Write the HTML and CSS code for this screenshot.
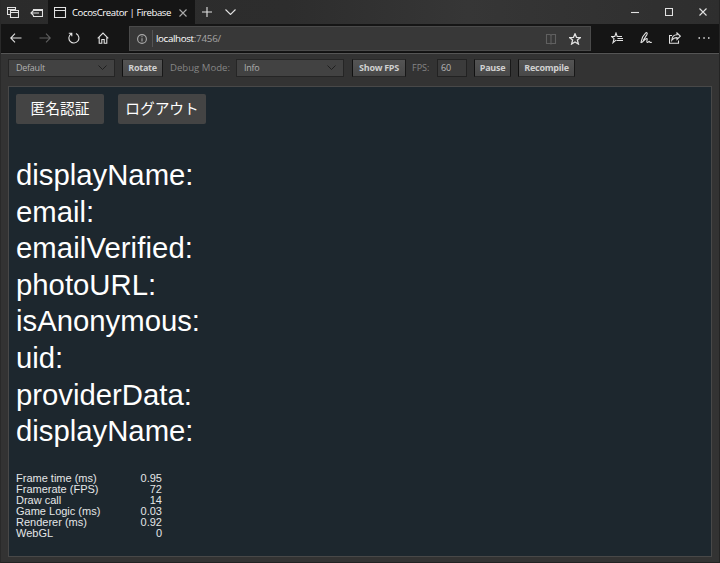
FILE: index.html
```html
<!DOCTYPE html>
<html lang="ja">
<head>
<meta charset="utf-8">
<title>CocosCreator | Firebase</title>
<link rel="stylesheet" href="styles.css">
</head>
<body>
<div class="window">
  <header class="tabs">
    <svg class="icon tabs-list" width="12" height="12" viewBox="0 0 12 12"><path d="M3 7.500H.5v-7h8V3M.5 2.500h8M3.500 3.500h8v7h-8zM3.500 5.500h8"/></svg>
    <svg class="icon tabs-aside" width="13" height="12" viewBox="0 0 13 12"><path d="M3.500 3.500v-1h9v7h-9v-1M3.500 3.500h9M9 6H1M3.500 3.500L1 6l2.500 2.500"/></svg>
    <div class="tab">
      <svg class="icon" width="13" height="12" viewBox="0 0 13 12"><path d="M.5.5h11v10H.5zM.5 3.500h11"/></svg>
      <span class="tab-title">CocosCreator | Firebase</span>
      <svg class="icon dim" width="8" height="8" viewBox="0 0 8 8"><path d="M.5.5l7 7M7.500.5l-7 7"/></svg>
    </div>
    <svg class="icon new-tab" width="10" height="10" viewBox="0 0 10 10"><path d="M5 0v10M0 5h10"/></svg>
    <svg class="icon tab-more" width="11" height="6" viewBox="0 0 11 6"><path d="M.5.5l5 5 5-5"/></svg>
    <div class="window-controls">
      <svg class="icon" width="8" height="8" viewBox="0 0 8 8"><path d="M0 4.500h8"/></svg>
      <svg class="icon" width="8" height="8" viewBox="0 0 8 8"><path d="M.5.5h7v7h-7z"/></svg>
      <svg class="icon" width="8" height="8" viewBox="0 0 8 8"><path d="M.5.5l7 7M7.500.5l-7 7"/></svg>
    </div>
  </header>
  <nav class="navbar">
    <div class="history">
      <svg class="icon" width="12" height="10" viewBox="0 0 12 10"><path d="M11.500 5H1M5 .7L.7 5 5 9.300"/></svg>
      <svg class="icon faint" width="12" height="10" viewBox="0 0 12 10"><path d="M.5 5H11M7 .7L11.300 5 7 9.300"/></svg>
      <svg class="icon" width="12" height="12" viewBox="0 0 12 12"><path d="M8 1.500a5 5 0 1 1-4.600.2M.8 1.200h3v3"/></svg>
      <svg class="icon" width="12" height="12" viewBox="0 0 12 12"><path d="M.7 6.300L6 1l5.300 5.300M2.200 5v6.300h2.600V7.500h2.400v3.800h2.600V5"/></svg>
    </div>
    <div class="address">
      <svg class="icon dim" width="10" height="10" viewBox="0 0 10 10"><circle cx="5" cy="5" r="4.400"/><path d="M5 4.200v3.300M5 2.300v1"/></svg>
      <span class="url">localhost<span class="port">:7456/</span></span>
      <svg class="icon faint" width="12" height="12" viewBox="0 0 12 12"><path d="M1.500 1.500h3.500l1 1 1-1h3.500v9H7l-1 .5-1-.5H1.500zM6 2v9"/></svg>
      <svg class="icon star" width="12" height="12" viewBox="0 0 12 12"><path d="M6 .8l1.500 3.500 3.900.3-3 2.500 1 3.900L6 8.900 2.600 11l1-3.900-3-2.500 3.900-.3z"/></svg>
    </div>
    <div class="actions">
      <svg class="icon" width="12" height="12" viewBox="0 0 12 12"><path d="M5 8.200L2 10.700l1-4L.5 4.500h3.300L5 1l1.200 3.500H11M6.500 6.500H12M5.500 8.500H12"/></svg>
      <svg class="icon" width="12" height="12" viewBox="0 0 12 12"><path d="M.8 10.800L2.600 5 5.700.9c1.300-.8 1.900.4 1.200 1.700L3.200 8.500M.8 10.800c2.800-1 4-4 6-4.300 1.300 0-.9 3.500.5 3.900 1 .3 1.200-1.200 2-1 .7.300.2 1.600 2.500.9"/></svg>
      <svg class="icon" width="12" height="12" viewBox="0 0 12 12"><path d="M3 3.500H.5v7.800h9V8.500M8 1l3.300 3.200L8 7.400V5.600C5.500 5.600 4 6.500 2.800 8.300 3 5 5 2.900 8 2.800z"/></svg>
      <svg class="icon dots" width="12" height="12" viewBox="0 0 12 12"><path d="M.5 6H2M5.300 6h1.500M10 6h1.500"/></svg>
    </div>
  </nav>
  <div class="toolbar">
    <div class="select device">Default<svg class="chevron" width="9" height="6" viewBox="0 0 9 6"><path d="M.5.5l4 4 4-4"/></svg></div>
    <div class="button rotate">Rotate</div>
    <span class="label debug">Debug Mode:</span>
    <div class="select mode">Info<svg class="chevron" width="9" height="6" viewBox="0 0 9 6"><path d="M.5.5l4 4 4-4"/></svg></div>
    <div class="button show-fps">Show FPS</div>
    <span class="label fps">FPS:</span>
    <div class="number">60</div>
    <div class="button pause">Pause</div>
    <div class="button recompile">Recompile</div>
  </div>
  <main class="game">
    <div class="game-buttons">
      <div class="game-button">匿名認証</div>
      <div class="game-button">ログアウト</div>
    </div>
    <div class="fields">
      <div>displayName:</div>
      <div>email:</div>
      <div class="verified">emailVerified:</div>
      <div>photoURL:</div>
      <div>isAnonymous:</div>
      <div>uid:</div>
      <div>providerData:</div>
      <div>displayName:</div>
    </div>
    <div class="stats">
      <div><span>Frame time (ms)</span><span>0.95</span></div>
      <div><span>Framerate (FPS)</span><span>72</span></div>
      <div><span>Draw call</span><span>14</span></div>
      <div><span>Game Logic (ms)</span><span>0.03</span></div>
      <div><span>Renderer (ms)</span><span>0.92</span></div>
      <div><span>WebGL</span><span>0</span></div>
    </div>
  </main>
</div>
</body>
</html>
```
FILE: styles.css
```css
* { box-sizing: border-box; }
body { margin: 0; background: #333; overflow: hidden; }
.window {
  width: 720px;
  height: 563px;
  border-left: 1px solid #292929;
  border-right: 1px solid #242424;
  border-bottom: 1px solid #222;
  background: #333;
  font-family: "Open Sans", "Noto Sans", sans-serif;
}
.icon { fill: none; stroke: #e2e2e2; stroke-width: 1.1; flex: none; }
.icon.dim { stroke: #aaa; }
.icon.faint { stroke: #606060; }
.icon.star { stroke-width: 1.3; }

.tabs { display: flex; align-items: center; height: 24px; background: linear-gradient(90deg, #2b2b2b, #2d2d2d 40%, #363636 65%, #2e2e2e); }
.tabs-list { margin: 1px 0 0 6px; }
.tabs-aside { margin: 1px 5px 0 11px; }
.tab { display: flex; align-items: center; width: 147px; height: 24px; padding: 1px 0 0 6px; background: #151515; }
.tab-title { width: 101px; margin: 0 6px 0 5px; font-size: 9.6px; letter-spacing: -0.42px; line-height: 14px; color: #fff; white-space: nowrap; }
.new-tab { margin-left: 7px; }
.tab-more { margin-left: 13px; }
.window-controls { display: flex; gap: 26px; margin-left: auto; padding-right: 12px; }

.navbar { display: flex; align-items: center; height: 29px; background: #151515; border-bottom: 1px solid #101010; }
.history { display: flex; align-items: center; width: 128px; padding-left: 9px; gap: 17px; }
.history .icon:nth-child(3) { margin-left: 0; }
.history .icon:nth-child(2) { margin-right: 0; }
.address { display: flex; align-items: center; width: 462px; height: 25px; margin-top: 1px; padding: 0 9px 0 7px; background: #383838; border: 1px solid #4a4a4a; }
.url { flex: 1; margin-left: 5px; padding-left: 3px; border-left: 1px solid #555; font-size: 9.8px; line-height: 17px; letter-spacing: -0.38px; color: #fff; }
.port { color: #a5a5a5; letter-spacing: -0.2px; }
.address .icon.faint { margin-right: 12px; }
.actions { display: flex; flex: 1; gap: 17px; padding-left: 20px; }
.dots { stroke-width: 1.5; }

.toolbar { display: flex; align-items: center; height: 33px; padding: 0 0 5px 7px; border-top: 1px solid #555; font-size: 9px; line-height: 16px; white-space: nowrap; }
.select { display: flex; align-items: center; justify-content: space-between; height: 18px; padding: 0 7px; background: #424242; border: 1px solid #252525; color: #b0b0b0; letter-spacing: -0.25px; }
.chevron { fill: none; stroke: #1f1f1f; }
.device { width: 107px; }
.mode { width: 108px; }
.button { display: flex; align-items: center; justify-content: center; height: 18px; background: linear-gradient(#545454, #484848); border: 1px solid #292929; border-left-color: #111; border-right-color: #181818; color: #d0d0d0; font-weight: 700; letter-spacing: -0.27px; }
.rotate { width: 41px; margin-left: 7px; }
.label { color: #858585; }
.debug { width: 66px; margin-left: 7px; font-size: 9.6px; }
.show-fps { width: 54px; margin-left: 8px; }
.fps { width: 18px; margin-left: 6px; }
.number { width: 30px; height: 18px; margin-left: 7px; padding-left: 3px; background: #3b3b3b; border: 1px solid #222; color: #b8b8b8; letter-spacing: -0.25px; }
.pause { width: 37px; margin-left: 7px; }
.recompile { width: 57px; margin-left: 7px; }

.game { width: 704px; height: 471px; margin-left: 7px; padding: 7px; overflow: hidden; background: #1d272e; border: 1px solid #484848; color: #fff; font-family: "Liberation Sans", "Noto Sans CJK JP", sans-serif; }
.game-buttons { display: flex; gap: 14px; }
.game-button { display: flex; align-items: center; justify-content: center; width: 88px; height: 30px; padding-bottom: 2px; border-radius: 2px; background: #444; font-family: "Noto Sans CJK JP", sans-serif; font-size: 14.7px; line-height: 22px; }
.fields { margin-top: 33px; font-size: 29.3px; line-height: 36.6px; }
.verified { letter-spacing: 0.08px; }
.stats { width: 146px; margin-top: 23px; font-size: 11px; line-height: 11px; color: #e4e6e7; }
.stats div { display: flex; justify-content: space-between; }
```
